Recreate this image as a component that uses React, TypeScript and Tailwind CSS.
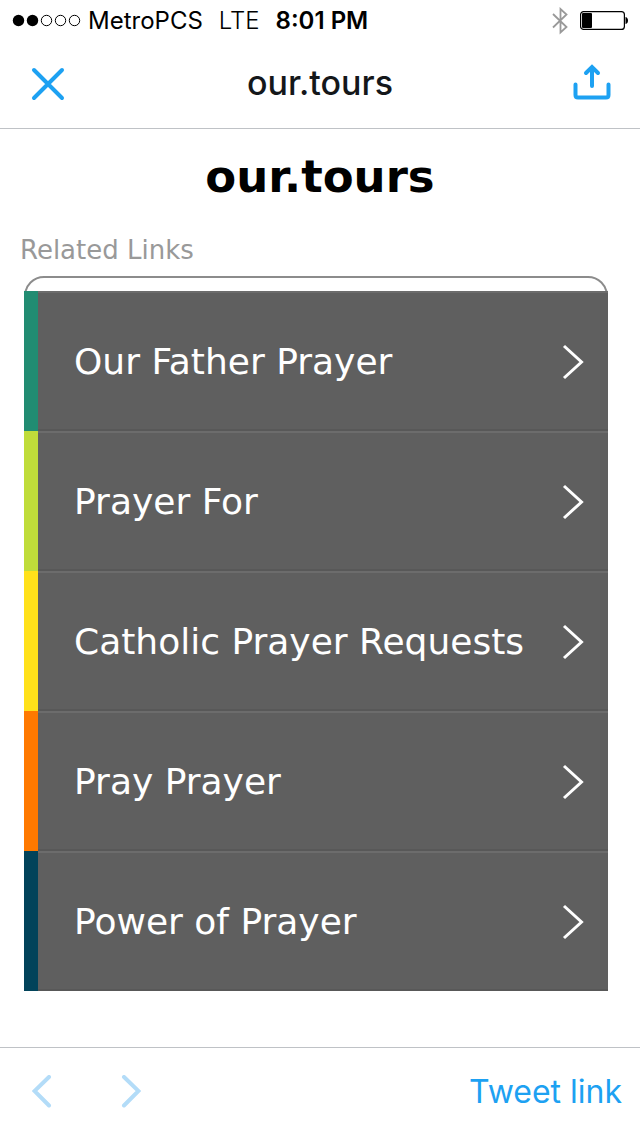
const links = [
  { label: 'Our Father Prayer', bar: 'bg-[#218c72]' },
  { label: 'Prayer For', bar: 'bg-[#bfdc3a]' },
  { label: 'Catholic Prayer Requests', bar: 'bg-[#ffe11a]' },
  { label: 'Pray Prayer', bar: 'bg-[#ff7900]' },
  { label: 'Power of Prayer', bar: 'bg-[#02435a]' },
];

function StatusBar() {
  return (
    <div className="flex h-10 items-center px-3 pt-0.5 text-2xl leading-9 text-black">
      <svg width="70" height="14" viewBox="0 0 70 14" aria-hidden="true">
        <circle cx="6.5" cy="6.5" r="5.7" />
        <circle cx="20.5" cy="6.5" r="5.7" />
        <g fill="none" stroke="currentColor" strokeWidth="1">
          <circle cx="34.5" cy="6.5" r="5.2" />
          <circle cx="48.5" cy="6.5" r="5.2" />
          <circle cx="62.5" cy="6.5" r="5.2" />
        </g>
      </svg>
      <span className="ml-1.5">MetroPCS</span>
      <span className="ml-4 font-light">LTE</span>
      <span className="ml-4 font-semibold">8:01 PM</span>
      <svg
        className="ml-auto"
        width="18"
        height="28"
        viewBox="0 0 18 28"
        fill="none"
        stroke="#999999"
        strokeWidth="1.8"
        aria-hidden="true"
      >
        <path d="M2 7L15.5 20L9.5 25.5V2L15.5 7.5L2 20.5" />
      </svg>
      <svg className="ml-2.5" width="49" height="20" viewBox="0 0 49 20" aria-hidden="true">
        <rect x="1.6" y="0.6" width="43.8" height="17.8" rx="3" fill="none" stroke="#000" strokeWidth="1.2" />
        <rect x="3" y="2" width="10" height="15" rx="1" />
        <path d="M46.5 6C48.5 6.5 49 8 49 9.5S48.5 12.5 46.5 13Z" />
      </svg>
    </div>
  );
}

function Header() {
  return (
    <header className="flex h-[89px] items-center justify-between border-b border-[#bfc2c6] px-7 text-[#1da1f2]">
      <button type="button" aria-label="Close" className="flex h-10 w-10 items-center justify-center">
        <svg width="34" height="34" viewBox="0 0 34 34" fill="none" stroke="currentColor" strokeWidth="4" strokeLinecap="round">
          <path d="M3 3L31 31M31 3L3 31" />
        </svg>
      </button>
      <div className="pb-0.5 text-[34px] leading-10 font-medium text-[#14171a]">our.tours</div>
      <button type="button" aria-label="Share" className="flex h-10 w-10 items-center justify-center">
        <svg width="38" height="40" viewBox="0 0 38 40" fill="none" stroke="currentColor" strokeWidth="4" strokeLinecap="round">
          <path d="M2.5 20.5V31Q2.5 33.5 5 33.5H33Q35.5 33.5 35.5 31V20.5" />
          <path d="M19 22V3.5M13 9L19 3L25 9" />
        </svg>
      </button>
    </header>
  );
}

function RelatedLinks() {
  return (
    <section className="mt-[30px]">
      <h2 className="px-5 text-[26px] leading-8 text-[#999999]">Related Links</h2>
      <nav aria-label="Related Links" className="mt-2.5 mr-8 ml-6">
        <div className="h-[15px] overflow-hidden">
          <div className="h-10 rounded-t-[20px] border-2 border-[#8c8c8c]" />
        </div>
        <ul>
          {links.map((link) => (
            <li key={link.label}>
              <a href="#" className="flex h-[140px] bg-[#5f5f5f] text-white">
                <span className={`w-3.5 shrink-0 ${link.bar}`} />
                <span className="flex flex-1 items-center justify-between border-t-2 border-b-2 border-t-[#6c6c6c] border-b-[#585858] pt-0.5 pr-6 pl-9 text-4xl leading-[48px]">
                  {link.label}
                  <svg width="22" height="36" viewBox="0 0 22 36" fill="none" stroke="currentColor" strokeWidth="3" aria-hidden="true">
                    <path d="M2 2L19.5 18L2 34" />
                  </svg>
                </span>
              </a>
            </li>
          ))}
        </ul>
      </nav>
    </section>
  );
}

function Toolbar() {
  return (
    <footer className="mt-auto flex h-[89px] items-center border-t border-[#bfc2c6] pr-[18px] pl-5 text-[#1da1f2]">
      <button type="button" aria-label="Back" disabled className="flex h-11 w-11 items-center justify-center text-[#b3dcf8]">
        <svg width="20" height="34" viewBox="0 0 20 34" fill="none" stroke="currentColor" strokeWidth="4" strokeLinecap="round">
          <path d="M17 2L2.5 16L17 30.5" />
        </svg>
      </button>
      <button type="button" aria-label="Forward" disabled className="ml-[45px] flex h-11 w-11 items-center justify-center text-[#b3dcf8]">
        <svg width="20" height="34" viewBox="0 0 20 34" fill="none" stroke="currentColor" strokeWidth="4" strokeLinecap="round">
          <path d="M3 2L17.5 16L3 30.5" />
        </svg>
      </button>
      <button type="button" className="ml-auto text-[32px] leading-10">
        Tweet link
      </button>
    </footer>
  );
}

export default function App() {
  return (
    <div className="flex min-h-screen flex-col bg-white font-['Inter',sans-serif]">
      <StatusBar />
      <Header />
      <main className="pb-10 font-['DejaVu_Sans',Verdana,sans-serif]">
        <h1 className="mt-[21px] text-center text-[45px] leading-[54px] font-bold text-black">our.tours</h1>
        <RelatedLinks />
      </main>
      <Toolbar />
    </div>
  );
}
